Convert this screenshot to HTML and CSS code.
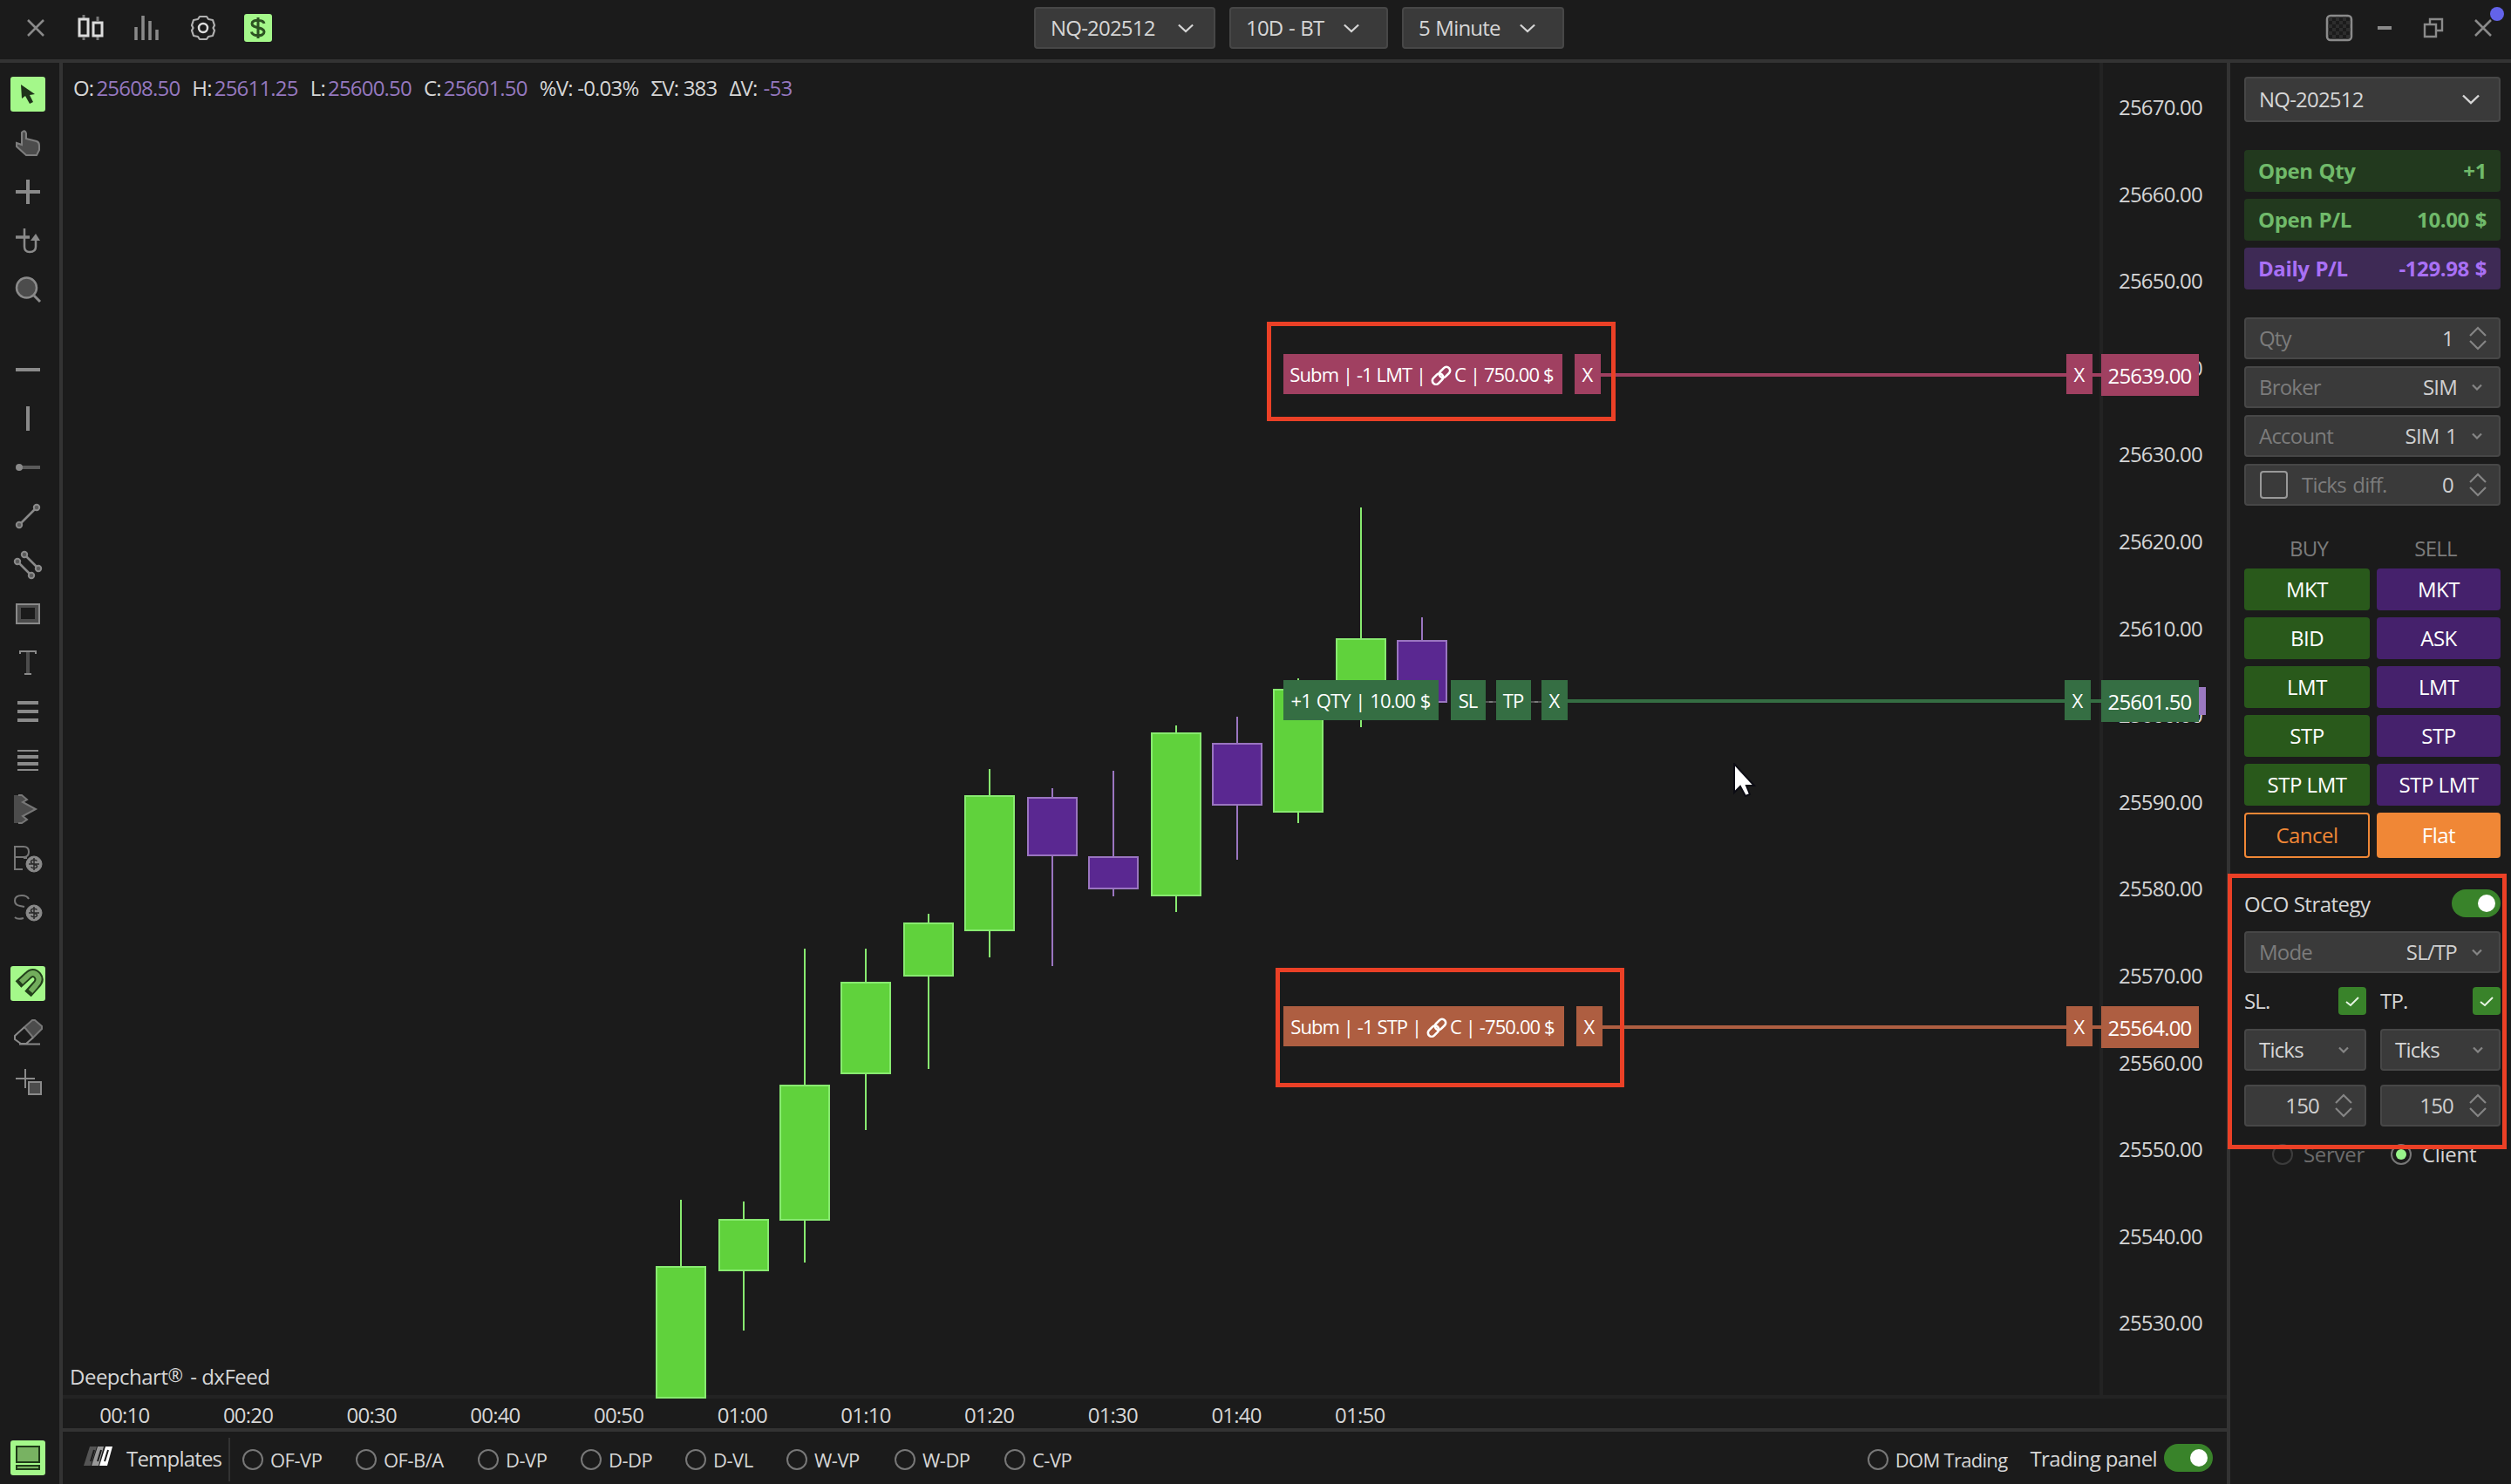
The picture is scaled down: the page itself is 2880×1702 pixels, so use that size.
FILE: index.html
```html
<!DOCTYPE html>
<html lang="en">
<head>
<meta charset="utf-8">
<title>NQ-202512</title>
<link rel="stylesheet" href="styles.css">
</head>
<body>
<svg class="defs" width="0" height="0">
  <symbol id="chev" viewBox="0 0 20 12"><path d="M1 1.5L10 10L19 1.5" fill="none" stroke="currentColor" stroke-width="2.4"/></symbol>
  <symbol id="chev-s" viewBox="0 0 12 8"><path d="M1 1.5L6 6.5L11 1.5" fill="none" stroke="currentColor" stroke-width="2.2"/></symbol>
  <symbol id="step" viewBox="0 0 20 28"><path d="M1 11L10 2L19 11M1 17L10 26L19 17" fill="none" stroke="currentColor" stroke-width="2.2"/></symbol>
  <symbol id="check" viewBox="0 0 32 32"><path d="M9 17L14 21L23 12" fill="none" stroke="#e8f5e4" stroke-width="2"/></symbol>
  <symbol id="link" viewBox="0 0 24 24"><g fill="none" stroke="#fff" stroke-width="2.6"><rect x="-7" y="-4.2" width="14" height="8.4" rx="4.2" transform="translate(8 15.6) rotate(-45)"/><rect x="-7" y="-4.2" width="14" height="8.4" rx="4.2" transform="translate(16 8) rotate(-45)"/></g></symbol>
  <symbol id="coin" viewBox="0 0 20 20"><circle cx="10" cy="10" r="9" fill="#8a8a8a"/><path d="M10 3V17M13.5 6.5C11 4.5 6.5 5 6.5 7.8S13.5 10 13.5 12.6S8.500 15.500 6.500 13.300M4 10H16" fill="none" stroke="#2a2a2a" stroke-width="1.500"/></symbol>
</svg>

<header class="topbar">
  <div class="top-left">
    <svg width="20" height="20" class="dim"><path d="M1 1L19 19M19 1L1 19" stroke-width="2.500"/></svg>
    <svg width="30" height="30" class="bright"><path d="M7 0V4M7 26V29M23 2V7M23 24V29" stroke="#777" stroke-width="3"/><path d="M2 5H12V24H2ZM18 9H28V24H18Z" stroke-width="3"/></svg>
    <svg width="30" height="30" class="dim"><path d="M3 14V29M11 1V29M19 7V29M27 17V29" stroke-width="3.500"/></svg>
    <svg width="30" height="30" class="bright"><path d="M11 2H19L21 5L26 6L28 12L26.500 15L28 18L26 24L21 25L19 28H11L9 25L4 24L2 18L3.500 15L2 12L4 6L9 5Z" stroke-width="2.200" stroke="#b0b0b0" stroke-linejoin="round"/><circle cx="15" cy="15" r="5" stroke-width="2.500"/></svg>
    <svg width="32" height="32" class="dollar"><path d="M16 4V28M23 11C22 6.500 9 5.500 9 11.300C9 17 23 14.500 23 20.500C23 26.500 9 26 8.500 20.500"/></svg>
  </div>
  <div class="top-mid">
    <div class="select w1"><span>NQ-202512</span><svg width="18" height="11"><use href="#chev"/></svg></div>
    <div class="select w2"><span>10D - BT</span><svg width="18" height="11"><use href="#chev"/></svg></div>
    <div class="select w3"><span>5 Minute</span><svg width="18" height="11"><use href="#chev"/></svg></div>
  </div>
  <div class="top-right">
    <svg class="i-grid" width="32" height="32"><defs><pattern id="ck" width="8" height="8" patternUnits="userSpaceOnUse"><path d="M0 0H4V4H0ZM4 4H8V8H4Z" fill="#2d2d2d"/></pattern></defs><rect x="2" y="2" width="28" height="28" rx="4" fill="url(#ck)" stroke="#8a8a8a" stroke-width="2.500"/></svg>
    <svg class="i-min" width="16" height="4"><path d="M0 2H16" stroke="#8a8a8a" stroke-width="4"/></svg>
    <svg class="i-res dim" width="24" height="24"><path d="M2 8H15V22H2ZM8 8V2H22V15H15" stroke-width="2.400"/></svg>
    <svg class="dim" width="20" height="20"><path d="M1 1L19 19M19 1L1 19" stroke-width="2.500"/></svg>
    <i class="notify"></i>
  </div>
</header>

<div class="main">
<nav class="tools">
  <svg class="on"><path d="M12 9L13 25L17 22L22 31L26 29L22 21L28 20Z" fill="#1f331a"/></svg>
  <svg><path d="M14 7Q17 5 18 9V15L30 18Q33 19 33 23V28L30 34H18L7 24V20L13 22V8Z" fill="#4c4c4c" stroke="#7e7e7e" stroke-width="2"/></svg>
  <svg><path d="M6 20H34M20 6V34" stroke-width="4"/></svg>
  <svg><path d="M6 16H22" stroke-width="3.500"/><path d="M16 6V27Q16 33 22 33Q29 33 29 27V18" stroke-width="2.500"/><path d="M23 20L29 12L34 20Z" fill="#8a8a8a" stroke="none"/></svg>
  <svg class="gap"><circle cx="18.500" cy="18" r="11.500" fill="#4c4c4c" stroke-width="2.500"/><path d="M27 27L34 34" stroke-width="3"/></svg>
  <svg><path d="M6 20H34" stroke-width="4"/></svg>
  <svg><path d="M20 6V34" stroke-width="4"/></svg>
  <svg><path d="M12 20H34" stroke="#5a5a5a" stroke-width="4"/><circle cx="10" cy="20" r="4" fill="#8a8a8a" stroke="none"/></svg>
  <svg><path d="M10 30L30 10" stroke-width="2.500"/><g fill="#5a5a5a" stroke-width="2"><circle cx="10" cy="30" r="3.200"/><circle cx="30" cy="10" r="3.200"/></g></svg>
  <svg><path d="M8 16L24 32M16 8L32 24" stroke-width="2.500"/><g fill="#5a5a5a" stroke-width="2"><circle cx="8" cy="16" r="3.200"/><circle cx="24" cy="32" r="3.200"/><circle cx="16" cy="8" r="3.200"/><circle cx="32" cy="24" r="3.200"/></g></svg>
  <svg><rect x="7" y="9" width="26" height="22" fill="#4c4c4c" stroke-width="2"/><rect x="12" y="13" width="16" height="13" fill="#1b1b1b" stroke="none"/></svg>
  <svg><path d="M20 8V32" stroke="#4c4c4c" stroke-width="4"/><path d="M11 10V7H29V10M16 33H24" stroke-width="2"/></svg>
  <svg><path d="M8 10H32M8 20H32M8 30H32" stroke-width="4"/></svg>
  <svg><path d="M8 9H32M8 31H32" stroke-width="2"/><path d="M8 16H32M8 24H32" stroke-width="4"/></svg>
  <svg><path d="M4 4H13L19 9L14 12L29 20L14 28L19 32L13 36H4Z" fill="#4c4c4c" stroke="none"/><path d="M9 4H13L19 9L14 12L29 20L14 28L19 32L13 36H9" stroke-width="2" stroke="#777"/></svg>
  <svg><path d="M14 33H5V7H15Q21 7 21 13Q21 19 15 19H5M15 20H19" stroke-width="2" stroke="#777"/><use href="#coin" x="17" y="17" width="20" height="20"/></svg>
  <svg class="gap2"><path d="M21 11Q19 7 13 7Q5 7 5 13Q5 18 11 19L16 20M5 32Q8 35 15 33" stroke-width="2" stroke="#777"/><use href="#coin" x="17" y="17" width="20" height="20"/></svg>
  <svg class="on"><path d="M9 21L20 11Q26 5 31 11Q35 16 29 22L20 32" stroke="#23401b" stroke-width="10"/><path d="M12 18.500L20 11Q26 5 31 11Q35 16 29 22L23 29" stroke="#72ad5c" stroke-width="6"/></svg>
  <svg><path d="M16 14L25 6H28L36 13V16L26 26Z" fill="#4c4c4c" stroke="#777" stroke-width="2"/><path d="M16 14L5 24V28L12 33H18L26 26M10 33.500H34" stroke-width="2"/></svg>
  <svg><path d="M6 17H28M17 6V28" stroke-width="2"/><rect x="21" y="21" width="14" height="14" fill="#4c4c4c" stroke-width="2"/></svg>
  <svg class="on last"><g fill="#78b262" stroke="#1f3a18" stroke-width="2"><rect x="7" y="7" width="26" height="18"/><rect x="7" y="29" width="26" height="4"/></g></svg>
</nav>

<section class="center">
  <div class="chart">
    <div class="plot">
      <p class="ohlc"><span>O:<b>25608.50</b></span><span>H:<b>25611.25</b></span><span>L:<b>25600.50</b></span><span>C:<b>25601.50</b></span><span>%V: -0.03%</span><span>ΣV: 383</span><span>ΔV:<b class="delta">-53</b></span></p>
      <p class="feed">Deepchart<sup>®</sup> - dxFeed</p>
    </div>
    <div class="prices">
      <span>25670.00</span><span>25660.00</span><span>25650.00</span><span>25640.00</span><span>25630.00</span><span>25620.00</span><span>25610.00</span><span>25600.00</span><span>25590.00</span><span>25580.00</span><span>25570.00</span><span>25560.00</span><span>25550.00</span><span>25540.00</span><span>25530.00</span>
    </div>
    <svg class="candles" width="2340" height="1532" viewBox="72 72 2340 1532" shape-rendering="crispEdges">
      <g class="up">
        <path d="M781 1376V1452M853 1378V1526M923 1088V1448M993 1088V1296M1065 1048V1226M1135 882V1098M1349 832V1046M1489 778V944M1561 582V834"/>
        <rect x="753" y="1453" width="56" height="150"/><rect x="825" y="1399" width="56" height="58"/><rect x="895" y="1245" width="56" height="154"/><rect x="965" y="1127" width="56" height="104"/><rect x="1037" y="1059" width="56" height="60"/><rect x="1107" y="913" width="56" height="154"/><rect x="1321" y="841" width="56" height="186"/><rect x="1461" y="791" width="56" height="140"/><rect x="1533" y="733" width="56" height="72"/>
      </g>
      <g class="down">
        <path d="M1207 904V1108M1277 884V1028M1419 822V986M1631 708V806"/>
        <rect x="1179" y="915" width="56" height="66"/><rect x="1249" y="983" width="56" height="36"/><rect x="1391" y="853" width="56" height="70"/><rect x="1603" y="735" width="56" height="70"/>
      </g>
    </svg>
    <i class="last-price"></i>
    <div class="order lmt"><span class="tag subm">Subm | -1 LMT | <svg width="26" height="24"><use href="#link"/></svg>C | 750.00 $</span><span class="tag x">X</span><i></i><span class="tag x">X</span><em></em><span class="tag price">25639.00</span></div>
    <div class="order pos"><span class="tag qty">+1 QTY | 10.00 $</span><span class="tag sl">SL</span><u></u><span class="tag sl">TP</span><u></u><span class="tag x">X</span><i></i><span class="tag x">X</span><em></em><span class="tag price">25601.50</span></div>
    <div class="order stp"><span class="tag subm">Subm | -1 STP | <svg width="26" height="24"><use href="#link"/></svg>C | -750.00 $</span><span class="tag x">X</span><i></i><span class="tag x">X</span><em></em><span class="tag price">25564.00</span></div>
    <svg class="cursor" width="26" height="40"><path d="M1 1V34L8 27L14 38L19 36L15 26H24Z" fill="#fff" stroke="#0c0c14" stroke-width="2"/></svg>
    <i class="mark m1"></i>
    <i class="mark m2"></i>
  </div>
  <div class="times"><span>00:10</span><span>00:20</span><span>00:30</span><span>00:40</span><span>00:50</span><span>01:00</span><span>01:10</span><span>01:20</span><span>01:30</span><span>01:40</span><span>01:50</span></div>
  <footer class="bottom">
    <svg class="tpl" width="34" height="24"><path d="M7 1H15L8 23H0Z" fill="#555"/><path d="M16 1H23L17 23H9Z" fill="#999"/><path d="M25 1H33L27 23H18Z" fill="#fff"/><path d="M12 5L8 18M20 5L16 18M28 5L24 18" stroke="#1b1b1b" stroke-width="2"/></svg>
    <span class="tpl-name">Templates</span>
    <div class="radios">
      <label style="width:130px"><i class="radio"></i>OF-VP</label><label style="width:140px"><i class="radio"></i>OF-B/A</label><label style="width:118px"><i class="radio"></i>D-VP</label><label style="width:120px"><i class="radio"></i>D-DP</label><label style="width:116px"><i class="radio"></i>D-VL</label><label style="width:124px"><i class="radio"></i>W-VP</label><label style="width:126px"><i class="radio"></i>W-DP</label><label><i class="radio"></i>C-VP</label>
    </div>
    <label class="dom"><i class="radio"></i>DOM Trading</label>
    <span class="tp">Trading panel</span><i class="toggle"></i>
  </footer>
</section>

<aside class="panel">
  <div class="field head"><span class="val">NQ-202512</span><svg width="20" height="12"><use href="#chev"/></svg></div>
  <div class="stats">
    <div class="stat"><span>Open Qty</span><span>+1</span></div>
    <div class="stat"><span>Open P/L</span><span>10.00 $</span></div>
    <div class="stat neg"><span>Daily P/L</span><span>-129.98 $</span></div>
  </div>
  <div class="fields">
    <div class="field"><span>Qty</span><b>1</b><svg class="st" width="20" height="28"><use href="#step"/></svg></div>
    <div class="field"><span>Broker</span><b>SIM</b><svg class="cs" width="12" height="8"><use href="#chev-s"/></svg></div>
    <div class="field"><span>Account</span><b>SIM 1</b><svg class="cs" width="12" height="8"><use href="#chev-s"/></svg></div>
    <div class="field"><i class="box"></i><span>Ticks diff.</span><b>0</b><svg class="st" width="20" height="28"><use href="#step"/></svg></div>
  </div>
  <div class="trade">
    <span class="cap">BUY</span><span class="cap">SELL</span>
    <button>MKT</button><button class="sell">MKT</button>
    <button>BID</button><button class="sell">ASK</button>
    <button>LMT</button><button class="sell">LMT</button>
    <button>STP</button><button class="sell">STP</button>
    <button>STP LMT</button><button class="sell">STP LMT</button>
    <button class="cancel">Cancel</button><button class="flat">Flat</button>
  </div>
  <div class="oco"><span>OCO Strategy</span><i class="toggle"></i></div>
  <div class="field mode"><span>Mode</span><b>SL/TP</b><svg class="cs" width="12" height="8"><use href="#chev-s"/></svg></div>
  <div class="pair">
    <div class="lab"><span>SL.</span><svg width="32" height="32"><use href="#check"/></svg></div>
    <div class="lab"><span>TP.</span><svg width="32" height="32"><use href="#check"/></svg></div>
    <div class="field"><span class="val">Ticks</span><svg class="cs" width="12" height="8"><use href="#chev-s"/></svg></div>
    <div class="field"><span class="val">Ticks</span><svg class="cs" width="12" height="8"><use href="#chev-s"/></svg></div>
    <div class="field"><b>150</b><svg class="st" width="20" height="28"><use href="#step"/></svg></div>
    <div class="field"><b>150</b><svg class="st" width="20" height="28"><use href="#step"/></svg></div>
  </div>
  <div class="where"><label class="off"><i class="radio"></i>Server</label><label class="sel"><i class="radio"></i>Client</label></div>
  <i class="mark m3"></i>
</aside>
</div>
</body>
</html>
```
FILE: styles.css
```css
* { box-sizing: border-box; }
body {
  margin: 0; width: 2880px; height: 1702px; overflow: hidden;
  background: #1b1b1b; color: #d6d6d6;
  font: 24px/32px "Open Sans", "Noto Sans", sans-serif; letter-spacing: -0.8px;
  display: flex; flex-direction: column;
}
p { margin: 0; }
b { font-weight: 400; }
svg { display: block; flex: none; }
span, label { white-space: nowrap; }
.defs { position: absolute; }

/* top bar */
.topbar { position: relative; height: 72px; flex: none; border-bottom: 4px solid #333; }
.topbar, .top-left, .top-right { display: flex; align-items: center; }
.top-left { width: 1186px; height: 64px; align-self: flex-start; padding-left: 31px; gap: 35px; }
.top-left svg:first-child { margin-right: 3px; }
.top-left svg:nth-child(3) { margin-left: -1px; }
.dim { fill: none; stroke: #8a8a8a; }
.bright { fill: none; stroke: #dcdcdc; }
.dollar { background: #a4f88a; border-radius: 3px; fill: none; stroke: #2c5222; stroke-width: 3; margin-left: -3px; }
.top-mid { display: flex; gap: 16px; align-self: flex-start; padding-top: 8px; word-spacing: 1px; }
.select {
  height: 48px; display: flex; align-items: center; justify-content: space-between;
  padding: 0 23px 0 17px; background: #3a3a3a; border: 2px solid #474747; border-radius: 4px;
}
.w1 { width: 208px; }
.w2 { width: 182px; padding-right: 31px; }
.w3 { width: 186px; padding-right: 31px; }
.top-right { margin-left: auto; height: 64px; align-self: flex-start; padding-right: 22px; position: relative; }
.i-grid { margin-right: 28px; }
.i-min { margin-right: 36px; }
.i-res { margin-right: 35px; }
.notify { position: absolute; right: 8px; top: 8px; width: 16px; height: 16px; border-radius: 50%; background: #6363ea; }

.main { flex: 1; display: flex; min-height: 0; }

/* drawing tools */
.tools { width: 72px; flex: none; border-right: 4px solid #333; padding: 16px 0 10px 12px; display: flex; flex-direction: column; gap: 16px; }
.tools svg { width: 40px; height: 40px; fill: none; stroke: #8a8a8a; }
.tools .gap { margin-bottom: 36px; }
.tools .gap2 { margin-bottom: 32px; }
.tools .on { background: #a4f88a; border-radius: 3px; stroke: none; }
.tools .last { margin-top: auto; }

/* chart */
.center { width: 2482px; flex: none; display: flex; flex-direction: column; }
.chart { position: relative; height: 1532px; display: flex; flex: none; border-bottom: 4px solid #232323; }
.plot { width: 2340px; border-right: 4px solid #232323; display: flex; flex-direction: column; justify-content: space-between; padding: 13px 0 5px 8px; }
.ohlc { padding-left: 4px; display: flex; gap: 14px; }
.ohlc b { color: #9578bf; margin-left: 3px; }
.ohlc .delta { margin-left: 7px; }
.feed { letter-spacing: -0.5px; }
.feed sup { font-size: 21px; line-height: 0; vertical-align: 3px; margin-right: 3px; }
.prices { padding-left: 18px; display: flex; flex-direction: column; }
.prices span { height: 99.6px; line-height: 102px; }
.candles { position: absolute; left: 0; top: 0; stroke-width: 2; }
.up { fill: #60d23c; stroke: #88ea70; }
.down { fill: #5a2891; stroke: #9a75c0; }
.last-price { position: absolute; left: 2450px; top: 716px; width: 8px; height: 32px; background: #9a79c0; }
.order { position: absolute; left: 1400px; width: 1050px; display: flex; align-items: flex-start; color: #fff; font-size: 22px; letter-spacing: -0.9px; }
.tag { height: 46px; line-height: 46px; background: var(--c); text-align: center; flex: none; padding-right: 1px; }
.tag svg { display: inline-block; vertical-align: -5px; margin-right: 2px; }
.subm { width: 320px; margin-right: 14px; padding-right: 3px; }
.x { width: 30px; }
.qty { width: 178px; margin-right: 14px; word-spacing: 1px; }
.sl { width: 40px; }
.order i { flex: 1; height: 4px; margin-top: 22px; background: var(--c); }
.order em { width: 10px; height: 4px; margin-top: 22px; background: var(--c); }
.order u { width: 12px; height: 2px; margin-top: 24px; background: repeating-linear-gradient(90deg, #555 0 4px, #7a7a7a 4px 8px); }
.price { width: 112px; height: 48px; line-height: 49px; font-size: 24px; letter-spacing: -0.8px; }
.lmt { --c: #a04061; top: 334px; }
.pos { --c: #356e43; top: 708px; }
.pos em { width: 12px; }
.stp { --c: #ae5e41; top: 1082px; }
.stp .subm { width: 322px; }
.cursor { position: absolute; left: 1916px; top: 803px; }
.mark { position: absolute; border: 5px solid #eb4026; }
.m1 { left: 1381px; top: 297px; width: 400px; height: 114px; }
.m2 { left: 1391px; top: 1038px; width: 400px; height: 137px; }

.times { height: 38px; border-bottom: 4px solid #333; display: flex; line-height: 37px; flex: none; }
.times span { width: 141.7px; text-align: center; }

/* bottom bar */
.bottom { flex: 1; display: flex; align-items: center; padding: 0 16px 0 24px; line-height: 34px; }
.tpl { margin-top: -4px; }
.bottom > span { margin-top: 2px; }
.tpl-name { width: 117px; margin-left: 15px; letter-spacing: -0.8px; }
.radios { display: flex; height: 50px; margin-top: 4px; align-items: center; padding-left: 14px; border-left: 2px solid #333; }
label { display: flex; align-items: center; gap: 8px; }
.radios, .dom { font-size: 22px; letter-spacing: -0.5px; }
.radio { width: 24px; height: 24px; border: 2px solid #777; border-radius: 50%; flex: none; }
.dom { margin-left: auto; margin-right: 26px; margin-top: 4px; letter-spacing: -0.7px; }
.tp { margin-right: 8px; letter-spacing: -0.6px; }
.toggle { width: 56px; height: 32px; border-radius: 16px; background: #39832a; padding: 6px; display: flex; justify-content: flex-end; flex: none; }
.toggle::before { content: ""; width: 20px; height: 20px; border-radius: 50%; background: #fff; }

/* trading panel */
.panel { flex: 1; min-width: 0; position: relative; border-left: 4px solid #333; padding: 16px 12px 0 16px; display: flex; flex-direction: column; }
.field {
  height: 48px; display: flex; align-items: center; padding: 0 15px;
  background: #3a3a3a; border: 2px solid #474747; border-radius: 4px; color: #7c7c7c; word-spacing: 2px;
}
.field b { margin-left: auto; color: #d0d0d0; }
.field svg { color: #858585; }
.field .val { color: #d6d6d6; margin-right: auto; }
.field .cs { margin: 0 4px 0 17px; }
.field .st { margin-left: 18px; margin-right: -1px; }
.head { height: 52px; padding-right: 22px; }
.head svg { color: #d6d6d6; }
.stats, .fields { display: flex; flex-direction: column; gap: 8px; margin-top: 32px; }
.stat { height: 48px; display: flex; align-items: center; justify-content: space-between; padding: 0 16px; border-radius: 4px; background: #22391e; color: #70ba6a; font-weight: 700; letter-spacing: -0.4px; word-spacing: 1px; }
.neg { background: #3e2a55; color: #a970f5; }
.box { width: 32px; height: 32px; border: 2px solid #999; border-radius: 4px; margin: 0 16px 0 1px; }
.trade { display: grid; grid-template-columns: 144px 142px; gap: 8px; margin-top: 32px; }
.cap { height: 32px; text-align: center; color: #7c7c7c; line-height: 33px; }
.cap:nth-child(1) { padding-left: 4px; }
.cap:nth-child(2) { padding-right: 7px; }
button { height: 48px; padding: 0; border: 0; border-radius: 4px; background: #29591b; color: #fff; font: inherit; letter-spacing: -0.5px; }
.sell { background: #45216c; }
.cancel { height: 52px; background: none; border: 2px solid #f08736; color: #f08736; }
.flat { height: 52px; background: #f08736; }
.oco { height: 32px; margin-top: 36px; display: flex; justify-content: space-between; align-items: center; letter-spacing: -0.5px; }
.oco span { padding-top: 2px; }
.mode { margin-top: 16px; }
.pair { display: grid; grid-template-columns: 140px 138px; gap: 16px; margin-top: 16px; }
.lab { height: 32px; display: flex; justify-content: space-between; align-items: center; }
.lab svg { background: #39832a; border-radius: 4px; }
.pair .cs { margin-right: 3px; }
.where { display: flex; margin-top: 16px; padding-left: 32px; height: 32px; letter-spacing: -0.3px; }
.where label { gap: 12px; }
.off { color: #6c6c6c; width: 136px; }
.off .radio { border-color: #3c3c3c; }
.sel .radio { display: flex; align-items: center; justify-content: center; }
.sel .radio::before { content: ""; width: 12px; height: 12px; border-radius: 50%; background: #98f58a; }
.m3 { left: -3px; top: 930px; width: 320px; height: 316px; }
```
